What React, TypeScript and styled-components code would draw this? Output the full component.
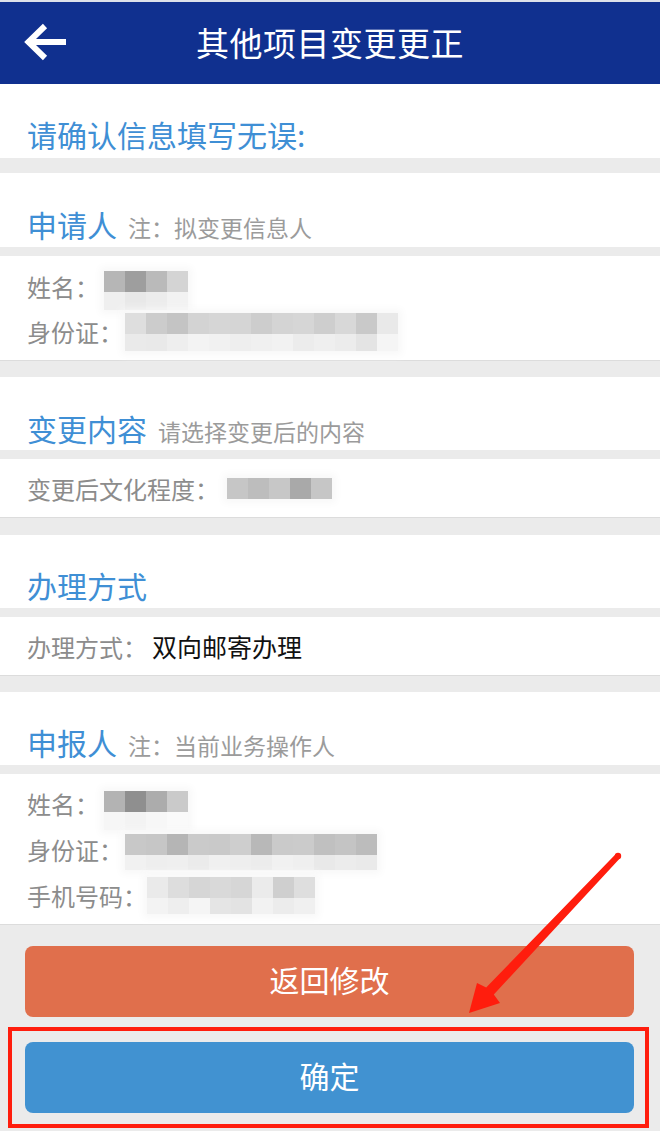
import React from 'react';
import styled, { createGlobalStyle } from 'styled-components';

const GlobalStyle = createGlobalStyle`
  html, body {
    margin: 0;
    padding: 0;
    background: #ebebeb;
  }
  body {
    font-family: "Noto Sans CJK SC", "Noto Sans", sans-serif;
  }
  * {
    box-sizing: border-box;
  }
`;

const Page = styled.div`
  position: relative;
  width: 660px;
  min-height: 1131px;
  background: #ebebeb;
  overflow: hidden;
`;

const TopBar = styled.header`
  display: grid;
  grid-template-columns: 1fr auto 1fr;
  align-items: center;
  height: 84px;
  border-top: 2px solid #dde1ea;
  background: #10308f;
  color: #fff;
`;

const BackButton = styled.button`
  justify-self: start;
  display: flex;
  align-items: center;
  margin-left: 22px;
  padding: 0;
  border: 0;
  background: none;
  cursor: pointer;
`;

const Title = styled.h1`
  margin: 0 0 2px;
  font-size: 33px;
  font-weight: 400;
  line-height: 40px;
  letter-spacing: 0.5px;
`;

const Section = styled.section<{ $gap?: number }>`
  margin-bottom: ${p => p.$gap ?? 0}px;
`;

const SectionHead = styled.div<{ $height: number; $top: number }>`
  display: flex;
  align-items: baseline;
  height: ${p => p.$height}px;
  padding: ${p => p.$top}px 27px 0;
  background: #fff;
`;

const HeadText = styled.h2`
  margin: 0;
  font-size: 30px;
  font-weight: 400;
  line-height: 30px;
  color: #3f8fd5;
`;

const HeadNote = styled.span`
  margin-left: 11px;
  font-size: 23px;
  line-height: 30px;
  color: #9b9b9b;
`;

const Body = styled.div<{ $pt?: number; $pb?: number }>`
  margin-top: 9px;
  padding: ${p => p.$pt ?? 0}px 27px ${p => p.$pb ?? 0}px;
  background: #fff;
  border-bottom: 1px solid #dcdcdc;
`;

const InfoRow = styled.div<{ $h: number }>`
  display: flex;
  align-items: center;
  height: ${p => p.$h}px;
`;

const Label = styled.span`
  font-size: 24px;
  color: #8c8c8c;
  white-space: nowrap;
`;

const Value = styled.span`
  margin-left: 5px;
  font-size: 25px;
  color: #111;
`;

const MosaicGrid = styled.div<{ $cols: number; $x: number; $y: number }>`
  display: grid;
  grid-template-columns: repeat(${p => p.$cols}, 21px);
  margin-left: ${p => p.$x}px;
  margin-top: ${p => p.$y}px;
  box-shadow: 0 0 8px 4px #f8f8f8;
`;

const MosaicCell = styled.div<{ $shade: string; $h: number }>`
  height: ${p => p.$h}px;
  background: ${p => p.$shade};
`;

type MosaicProps = { rows: string[][]; x: number; y?: number; heights?: number[] };

const Mosaic: React.FC<MosaicProps> = ({ rows, x, y = 0, heights = [21, 18] }) => (
  <MosaicGrid $cols={rows[0].length} $x={x} $y={y} aria-hidden="true">
    {rows.map((row, r) =>
      row.map((shade, c) => <MosaicCell key={`${r}-${c}`} $shade={shade} $h={heights[r] ?? 18} />)
    )}
  </MosaicGrid>
);

const Footer = styled.footer`
  display: flex;
  flex-direction: column;
  padding: 21px 11px 3px 8px;
`;

const ActionButton = styled.button<{ $tone: 'back' | 'ok' }>`
  width: 100%;
  height: 71px;
  padding: 0 0 6px;
  border: 0;
  border-radius: 8px;
  background: ${p => (p.$tone === 'back' ? '#e06f4c' : '#4192d1')};
  color: #fff;
  font-family: inherit;
  font-size: 30px;
  font-weight: 400;
  cursor: pointer;
`;

const BackWrap = styled.div`
  margin: 0 15px 10px 17px;
`;

const HighlightFrame = styled.div`
  padding: 11px 11px 11px 13px;
  border: 4px solid #ff1d0d;
`;

const Annotation = styled.svg`
  position: absolute;
  left: 0;
  top: 0;
  pointer-events: none;
`;

const BackArrow = () => (
  <svg width="46" height="40" viewBox="0 0 46 40">
    <path d="M44 19H8 M23 3 L6.5 19 L23 35" fill="none" stroke="#fff" strokeWidth="6" strokeLinejoin="miter" />
  </svg>
);

const nameA = [
  ['#b6b6b6', '#9e9e9e', '#bababa', '#d4d4d4'],
  ['#efefef', '#e8e8e8', '#ececec', '#f2f2f2'],
];
const idA = [
  ['#dedede', '#cccccc', '#c4c4c4', '#d3d3d3', '#d6d6d6', '#d5d5d5', '#cdcdcd', '#d4d4d4', '#d6d6d6', '#cecece', '#d8d8d8', '#c9c9c9', '#e9e9e9'],
  ['#eaeaea', '#e9e9e9', '#eeeeee', '#f3f3f3', '#f1f1f1', '#eeeeee', '#f0f0f0', '#f2f2f2', '#ececec', '#efefef', '#ececec', '#e4e4e4', '#f5f5f5'],
];
const edu = [['#c6c6c6', '#bdbdbd', '#c7c7c7', '#a9a9a9', '#c6c6c6']];
const nameB = [
  ['#b3b3b3', '#8f8f8f', '#acacac', '#cacaca'],
  ['#f6f6f6', '#f3f3f3', '#f7f7f7', '#fafafa'],
];
const idB = [
  ['#c8c8c8', '#c6c6c6', '#b5b5b5', '#cacaca', '#c9c9c9', '#cecece', '#b8b8b8', '#cacaca', '#cbcbcb', '#c0c0c0', '#c4c4c4', '#bcbcbc'],
  ['#f1f1f1', '#eeeeee', '#efefef', '#ebebeb', '#f0f0f0', '#eeeeee', '#ececec', '#f1f1f1', '#efefef', '#e9e9e9', '#ececec', '#eaeaea'],
];
const phoneB = [
  ['#eaeaea', '#dddddd', '#d6d6d6', '#d9d9d9', '#d6d6d6', '#ebebeb', '#cfcfcf', '#dedede'],
  ['#f3f3f3', '#eeeeee', '#f5f5f5', '#e5e5e5', '#e3e3e3', '#f2f2f2', '#ececec', '#f0f0f0'],
];

export default function App() {
  return (
    <Page>
      <GlobalStyle />
      <TopBar>
        <BackButton aria-label="返回">
          <BackArrow />
        </BackButton>
        <Title>其他项目变更更正</Title>
        <span />
      </TopBar>

      <Section $gap={15}>
        <SectionHead $height={74} $top={35}>
          <HeadText>请确认信息填写无误:</HeadText>
        </SectionHead>
      </Section>

      <Section $gap={16}>
        <SectionHead $height={74} $top={36}>
          <HeadText>申请人</HeadText>
          <HeadNote>注：拟变更信息人</HeadNote>
        </SectionHead>
        <Body $pt={8} $pb={6}>
          <InfoRow $h={45}>
            <Label>姓名：</Label>
            <Mosaic rows={nameA} x={5} y={8} />
          </InfoRow>
          <InfoRow $h={45}>
            <Label>身份证：</Label>
            <Mosaic rows={idA} x={2} y={0} heights={[21, 17]} />
          </InfoRow>
        </Body>
      </Section>

      <Section $gap={17}>
        <SectionHead $height={73} $top={36}>
          <HeadText>变更内容</HeadText>
          <HeadNote>请选择变更后的内容</HeadNote>
        </SectionHead>
        <Body>
          <InfoRow $h={58}>
            <Label>变更后文化程度：</Label>
            <Mosaic rows={edu} x={8} y={0} />
          </InfoRow>
        </Body>
      </Section>

      <Section $gap={16}>
        <SectionHead $height={73} $top={35}>
          <HeadText>办理方式</HeadText>
        </SectionHead>
        <Body>
          <InfoRow $h={58}>
            <Label>办理方式：</Label>
            <Value>双向邮寄办理</Value>
          </InfoRow>
        </Body>
      </Section>

      <Section>
        <SectionHead $height={73} $top={35}>
          <HeadText>申报人</HeadText>
          <HeadNote>注：当前业务操作人</HeadNote>
        </SectionHead>
        <Body $pt={6} $pb={6}>
          <InfoRow $h={46}>
            <Label>姓名：</Label>
            <Mosaic rows={nameB} x={5} y={14} />
          </InfoRow>
          <InfoRow $h={46}>
            <Label>身份证：</Label>
            <Mosaic rows={idB} x={2} y={6} heights={[21, 15]} />
          </InfoRow>
          <InfoRow $h={46}>
            <Label>手机号码：</Label>
            <Mosaic rows={phoneB} x={0} y={0} heights={[21, 16]} />
          </InfoRow>
        </Body>
      </Section>

      <Footer>
        <BackWrap>
          <ActionButton $tone="back">返回修改</ActionButton>
        </BackWrap>
        <HighlightFrame>
          <ActionButton $tone="ok">确定</ActionButton>
        </HighlightFrame>
      </Footer>

      <Annotation width="660" height="1131" viewBox="0 0 660 1131" aria-hidden="true">
        <path
          d="M615.8 853.9 L486.2 987.4 L477 983 L469 1013 L500 1003 L493.8 994.6 L620.2 858.1 Z"
          fill="#ff1d0d"
        />
        <circle cx="618" cy="856" r="3.2" fill="#ff1d0d" />
      </Annotation>
    </Page>
  );
}
